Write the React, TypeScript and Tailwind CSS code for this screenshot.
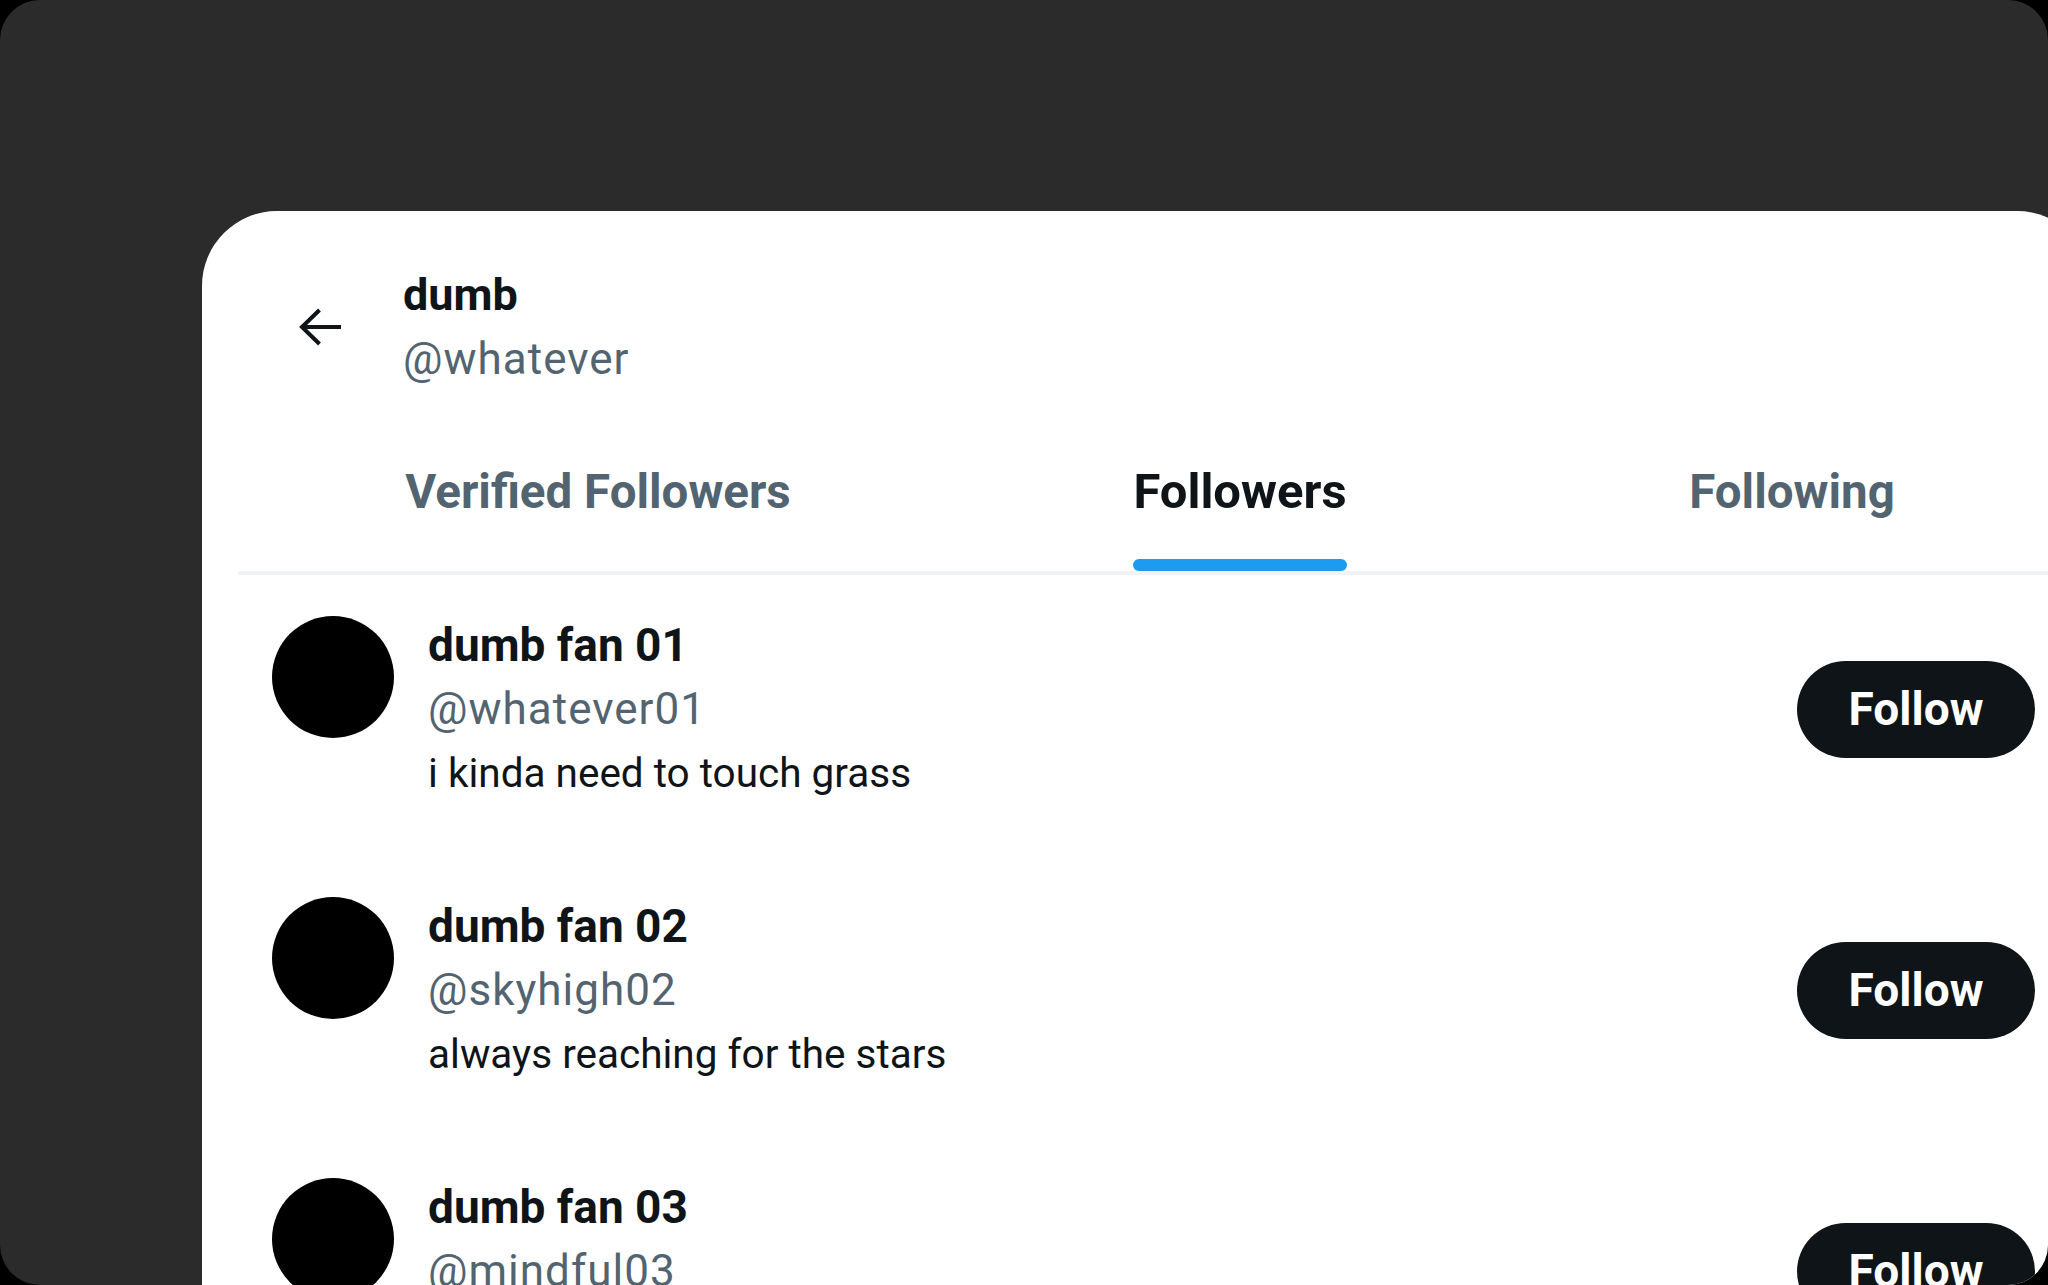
import { useState } from "react";

type Fan = {
  name: string;
  handle: string;
  bio?: string;
};

const fans: Fan[] = [
  { name: "dumb fan 01", handle: "@whatever01", bio: "i kinda need to touch grass" },
  { name: "dumb fan 02", handle: "@skyhigh02", bio: "always reaching for the stars" },
  { name: "dumb fan 03", handle: "@mindful03" },
];

const tabs = [
  { label: "Verified Followers", width: "w-[720px]" },
  { label: "Followers", width: "w-[564px]" },
  { label: "Following", width: "w-[540px]" },
];

function BackArrow() {
  return (
    <svg width="44" height="38" viewBox="0 0 44 38" fill="none" className="shrink-0">
      <path
        d="M43 19H4M21.5 2L4 19l17.5 17"
        stroke="#0f1419"
        strokeWidth="4"
        strokeLinejoin="miter"
      />
    </svg>
  );
}

function FanRow({ fan }: { fan: Fan }) {
  return (
    <div className="flex items-center pl-[70px] pr-[57px]">
      <div className="mt-[3px] h-[122px] w-[122px] shrink-0 self-start rounded-full bg-black" />
      <div className="ml-[34px] flex min-h-[192px] flex-1 flex-col">
        <div className="text-[46px] font-bold leading-[64px] text-[#0f1419]">{fan.name}</div>
        <div className="text-[44px] leading-[64px] tracking-[1px] text-[#536471]">{fan.handle}</div>
        {fan.bio && <div className="text-[40.5px] leading-[64px] text-[#0f1419]">{fan.bio}</div>}
      </div>
      <button className="flex h-[97px] w-[238px] shrink-0 items-center justify-center rounded-full bg-[#0f1419] text-[46px] font-bold text-white">
        Follow
      </button>
    </div>
  );
}

export default function App() {
  const [active, setActive] = useState(1);

  return (
    <div className="h-[1285px] w-[2048px] bg-black font-['Roboto',sans-serif]">
      <div className="flex h-full overflow-hidden rounded-[40px] bg-[#2b2b2b] pl-[202px] pt-[211px]">
        <div className="h-[1200px] w-[1890px] shrink-0 rounded-t-[75px] bg-white">
          {/* profile header */}
          <div className="flex items-center pl-[96px] pt-[52px]">
            <BackArrow />
            <div className="ml-[61px] flex flex-col">
              <div className="text-[45px] font-bold leading-[64px] text-[#0f1419]">dumb</div>
              <div className="text-[44px] leading-[64px] tracking-[1px] text-[#536471]">@whatever</div>
            </div>
          </div>

          {/* tabs */}
          <div className="ml-[36px] flex border-b-4 border-[#eff3f4]">
            {tabs.map((tab, i) => (
              <button
                key={tab.label}
                onClick={() => setActive(i)}
                className={`${tab.width} flex h-[180px] shrink-0 justify-center`}
              >
                <div className="flex flex-col items-stretch pt-[69px]">
                  <span
                    className={`font-bold leading-[64px] ${
                      active === i ? "text-[49px] text-[#0f1419]" : "text-[47.5px] text-[#536471]"
                    }`}
                  >
                    {tab.label}
                  </span>
                  {active === i && <div className="mt-[35px] h-[12px] rounded-full bg-[#1d9bf0]" />}
                </div>
              </button>
            ))}
          </div>

          {/* follower list */}
          <div className="flex flex-col gap-[89px] pt-[38px]">
            {fans.map((fan) => (
              <FanRow key={fan.handle} fan={fan} />
            ))}
          </div>
        </div>
      </div>
    </div>
  );
}
